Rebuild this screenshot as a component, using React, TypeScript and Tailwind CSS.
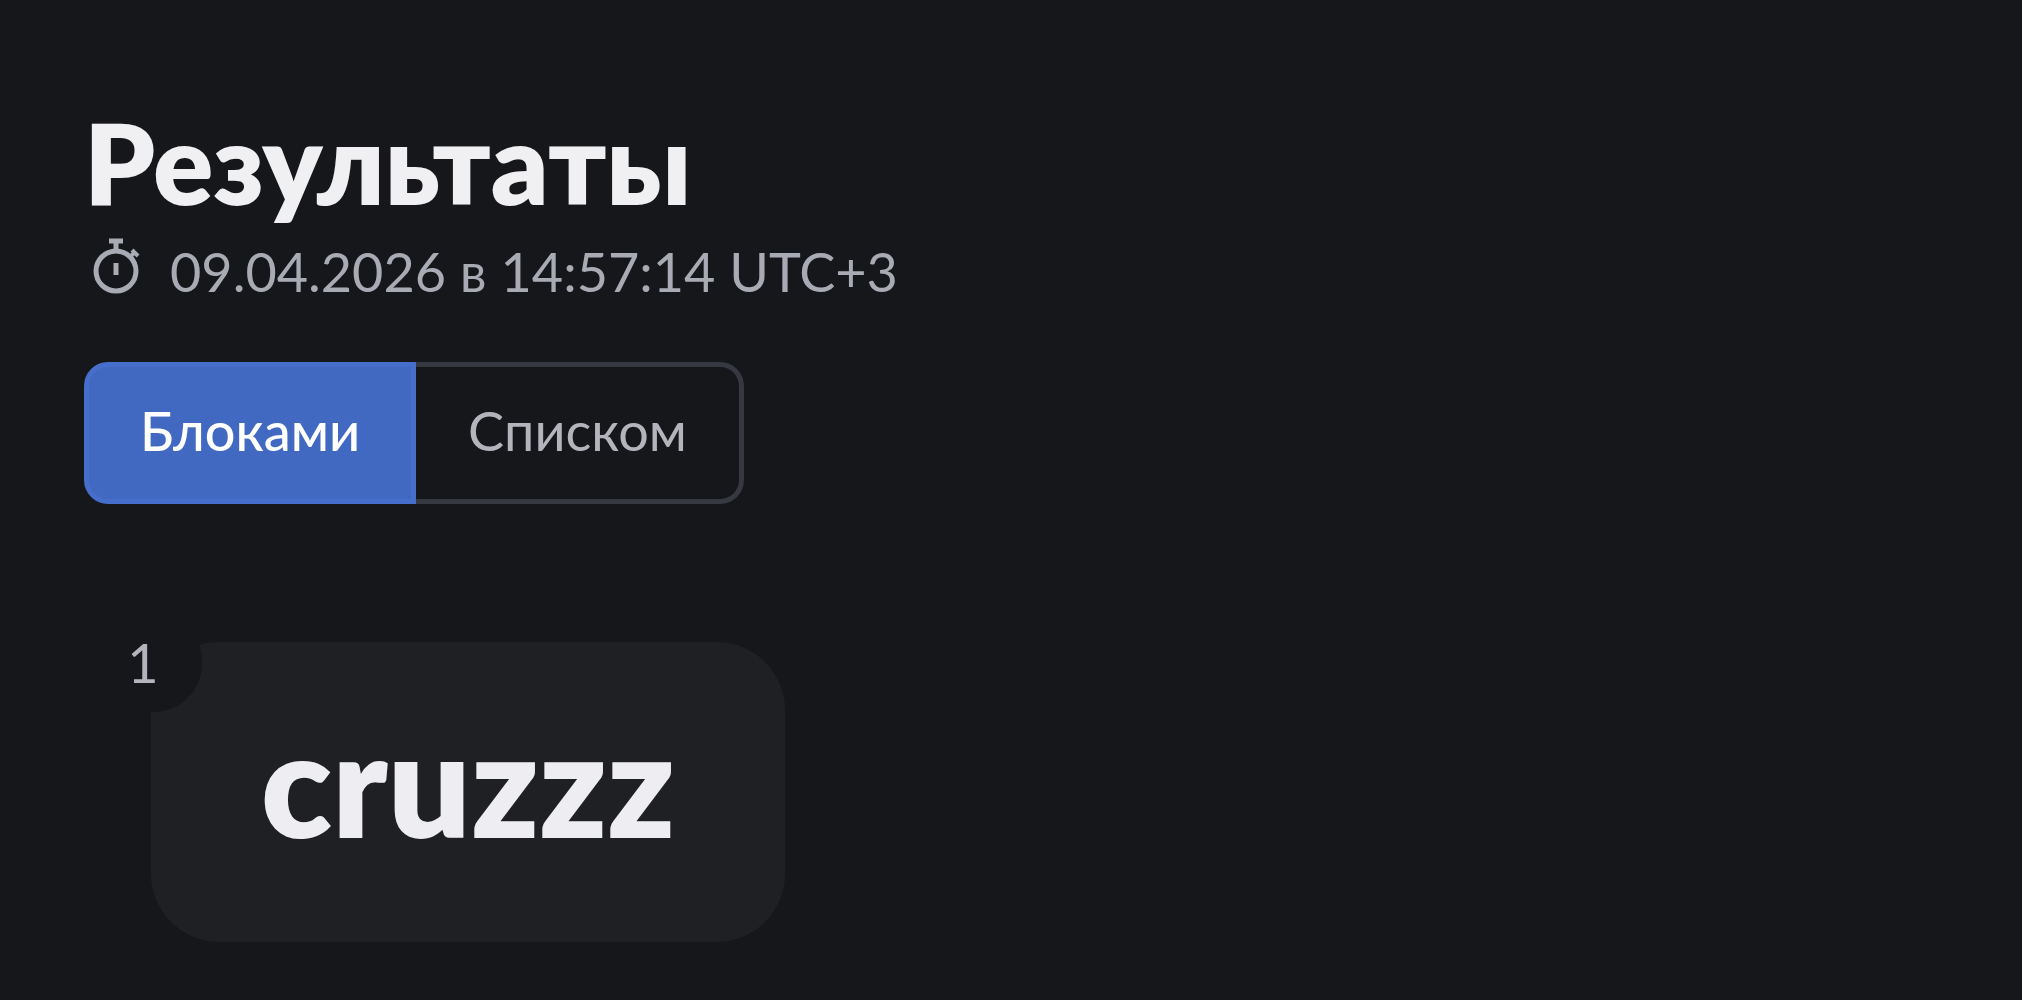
import { useState } from 'react';

interface Result {
  place: number;
  name: string;
}

const results: Result[] = [{ place: 1, name: 'cruzzz' }];

type ViewMode = 'blocks' | 'list';

function StopwatchIcon() {
  return (
    <svg
      className="mt-0.5 w-16 h-14 shrink-0"
      viewBox="0 0 64 56"
      fill="none"
      stroke="currentColor"
      strokeWidth="5"
      aria-hidden="true"
    >
      <circle cx="32" cy="33" r="20" />
      <path d="M25 3h14M32 3v10M32 25v12" />
      <path d="M45 20l6-6" strokeWidth="4" />
      <path d="M48 12l6 6" strokeWidth="4" />
    </svg>
  );
}

function ResultCard({ result }: { result: Result }) {
  return (
    <li className="relative ml-[67px] rounded-[68px] bg-[#1f2024] px-[110px] pb-5 h-[300px] flex items-center justify-center">
      <span className="absolute -left-[67px] -top-[30px] w-[118px] h-[100px] rounded-[48px] bg-[#16171a] flex items-center justify-center text-[54px] text-[#b4b5bc]">
        {result.place}
      </span>
      <span className="text-[146px] leading-none font-extrabold text-[#eeeef2]">{result.name}</span>
    </li>
  );
}

export default function App() {
  const [view, setView] = useState<ViewMode>('blocks');

  const tabClass = (mode: ViewMode) =>
    view === mode
      ? 'bg-[#4169c1] border-[#466fcb] text-white font-medium'
      : 'border-[#363842] text-[#b4b5bc]';

  return (
    <main className="min-h-screen bg-[#16171a] px-[84px] pt-[104px] font-['Lato','Noto_Sans',sans-serif]">
      <h1 className="text-[112px] leading-[116px] font-extrabold text-[#f0f0f3]">Результаты</h1>
      <p className="mt-4 flex items-start gap-[22px] text-[54px] leading-[72px] text-[#a9abb4]">
        <StopwatchIcon />
        <time dateTime="2026-04-09T14:57:14+03:00">09.04.2026 в 14:57:14 UTC+3</time>
      </p>

      <div className="mt-[54px] flex text-[54px] leading-[72px]">
        <button
          type="button"
          aria-pressed={view === 'blocks'}
          onClick={() => setView('blocks')}
          className={`h-[142px] w-[332px] pb-1 rounded-l-3xl border-[5px] ${tabClass('blocks')}`}
        >
          Блоками
        </button>
        <button
          type="button"
          aria-pressed={view === 'list'}
          onClick={() => setView('list')}
          className={`h-[142px] w-[328px] pb-1 rounded-r-3xl border-[5px] border-l-0 ${tabClass('list')}`}
        >
          Списком
        </button>
      </div>

      <ul className="mt-[138px] flex flex-wrap">
        {results.map((result) => (
          <ResultCard key={result.place} result={result} />
        ))}
      </ul>
    </main>
  );
}
